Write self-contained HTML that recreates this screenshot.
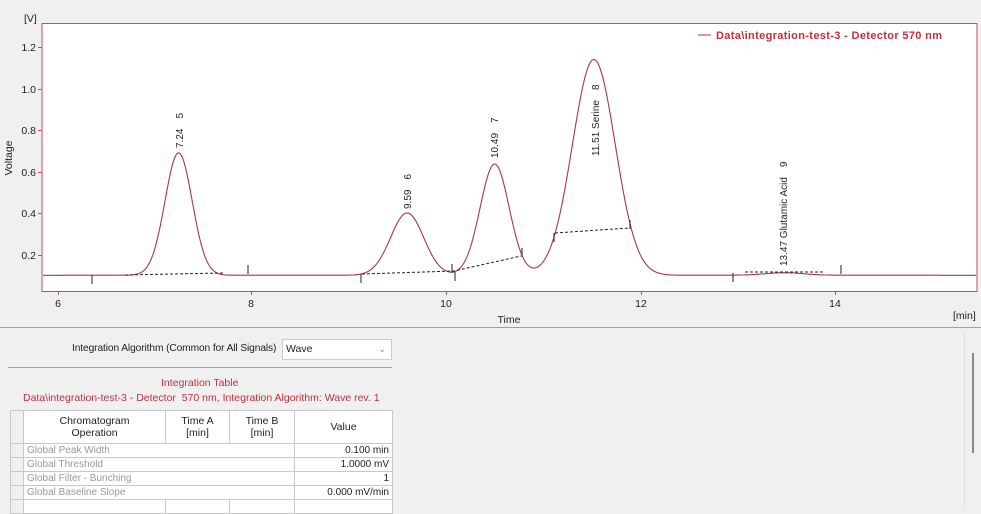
<!DOCTYPE html>
<html><head><meta charset="utf-8"><style>
body{margin:0;width:981px;height:510px;overflow:hidden;background:#f0f0f0;font-family:"Liberation Sans",sans-serif;position:relative}
.abs{position:absolute}
table{border-collapse:collapse;font-size:10px;table-layout:fixed}
td{border:1px solid #c8c8c8;height:13px;padding:0 3px;background:#fff;color:#999;white-space:nowrap;overflow:hidden}
th{border:1px solid #c8c8c8;font-weight:normal;color:#222;background:#fff;font-size:10.5px;line-height:12px}
td.rh,th.rh{background:#f0f0f0;padding:0}
td.v{text-align:right;color:#222}
</style></head><body>
<svg class="abs" style="left:0;top:0" width="981" height="328" font-family="Liberation Sans, sans-serif" font-size="10.5">
<rect x="0" y="0" width="981" height="328" fill="#f0f0f0"/>
<rect x="42" y="23.5" width="935" height="268" fill="#fff" stroke="#c05060" stroke-width="1"/>
<text x="24" y="22" fill="#222">[V]</text>
<g fill="#222" text-anchor="end">
<text x="36" y="51">1.2</text><text x="36" y="93">1.0</text><text x="36" y="134">0.8</text><text x="36" y="176">0.6</text><text x="36" y="217">0.4</text><text x="36" y="259">0.2</text>
</g>
<g stroke="#c05060"><line x1="38" y1="47.5" x2="42" y2="47.5"/><line x1="38" y1="89.5" x2="42" y2="89.5"/><line x1="38" y1="130.5" x2="42" y2="130.5"/><line x1="38" y1="172.5" x2="42" y2="172.5"/><line x1="38" y1="213.5" x2="42" y2="213.5"/><line x1="38" y1="255.5" x2="42" y2="255.5"/>
<line x1="58.5" y1="291" x2="58.5" y2="295"/><line x1="251.5" y1="291" x2="251.5" y2="295"/><line x1="446.5" y1="291" x2="446.5" y2="295"/><line x1="641.5" y1="291" x2="641.5" y2="295"/><line x1="835.5" y1="291" x2="835.5" y2="295"/></g>
<g fill="#222" text-anchor="middle"><text x="58" y="307">6</text><text x="251" y="307">8</text><text x="446" y="307">10</text><text x="641" y="307">12</text><text x="835" y="307">14</text></g>
<text x="509" y="323" fill="#222" text-anchor="middle">Time</text>
<text x="953" y="319" fill="#222">[min]</text>
<text transform="translate(12,158) rotate(-90)" fill="#222" text-anchor="middle">Voltage</text>
<line x1="698" y1="35" x2="711" y2="35" stroke="#c03040"/>
<text x="716" y="39" fill="#c03040" font-weight="bold" font-size="11" textLength="226">Data\integration-test-3 - Detector  570 nm</text>
<path id="sig" fill="none" stroke="#a83848" stroke-width="1.1" d=""/>
<g stroke="#222" stroke-dasharray="3,2" fill="none">
<path d="M125 275 L223 273"/><path d="M362 274 L454 271 L521 256"/><path d="M555 233 L629 228"/><path d="M745 272 L823 272"/>
</g>
<g stroke="#222"><line x1="92" y1="275" x2="92" y2="284"/><line x1="248" y1="265" x2="248" y2="274"/><line x1="361" y1="274" x2="361" y2="283"/><line x1="452" y1="264" x2="452" y2="273"/><line x1="455" y1="272" x2="455" y2="281"/><line x1="522" y1="248" x2="522" y2="257"/><line x1="554" y1="233" x2="554" y2="242"/><line x1="630" y1="220" x2="630" y2="229"/><line x1="733" y1="273" x2="733" y2="282"/><line x1="841" y1="265" x2="841" y2="274"/></g>
<g fill="#222" font-size="10">
<text transform="translate(183,148) rotate(-90)">7.24<tspan dx="10">5</tspan></text>
<text transform="translate(411,209) rotate(-90)">9.59<tspan dx="10">6</tspan></text>
<text transform="translate(498,158) rotate(-90)">10.49<tspan dx="10">7</tspan></text>
<text transform="translate(599,156) rotate(-90)">11.51 Serine<tspan dx="10">8</tspan></text>
<text transform="translate(787,266) rotate(-90)">13.47 Glutamic Acid<tspan dx="10">9</tspan></text>
</g>
<line x1="0" y1="327.5" x2="981" y2="327.5" stroke="#a0a0a0"/>
</svg>
<script>
(function(){var P=[[7.24,0.59,0.14],[9.59,0.3,0.17],[10.49,0.536,0.15],[11.51,1.04,0.22],[13.47,0.012,0.2]];var d="";
for(var x=43;x<=976;x++){var t=6+(x-58)/97.25;var v=0.1;for(var i=0;i<P.length;i++){var z=(t-P[i][0])/P[i][2];v+=P[i][1]*Math.exp(-z*z/2);}var y=296-207.5*v;d+=(x==43?"M":"L")+x+" "+y.toFixed(1);}
document.getElementById("sig").setAttribute("d",d);})();
</script>
<div class="abs" style="left:72px;top:343px;font-size:10.2px;color:#222;letter-spacing:-0.1px">Integration Algorithm (Common for All Signals)</div>
<div class="abs" style="left:282px;top:339px;width:108px;height:19px;border:1px solid #ccc;background:#fff;font-size:10.5px;line-height:19px;color:#222"><span style="margin-left:3px">Wave</span><span style="position:absolute;right:5px;top:0;color:#888;font-size:9px">&#8964;</span></div>
<div class="abs" style="left:8px;top:367px;width:384px;height:1px;background:#a0a0a0"></div>
<div class="abs" style="left:161px;top:377px;font-size:10.5px;color:#c03040">Integration Table</div>
<div class="abs" style="left:23px;top:392px;font-size:10.5px;color:#c03040">Data\integration-test-3 - Detector&nbsp; 570 nm, Integration Algorithm: Wave rev. 1</div>
<table class="abs" style="left:10px;top:410px;width:382px">
<colgroup><col style="width:13px"><col style="width:142px"><col style="width:64px"><col style="width:65px"><col style="width:98px"></colgroup>
<tr style="height:33px"><th class="rh"></th><th>Chromatogram<br>Operation</th><th>Time A<br>[min]</th><th>Time B<br>[min]</th><th>Value</th></tr>
<tr><td class="rh"></td><td colspan="3">Global Peak Width</td><td class="v">0.100 min</td></tr>
<tr><td class="rh"></td><td colspan="3">Global Threshold</td><td class="v">1.0000 mV</td></tr>
<tr><td class="rh"></td><td colspan="3">Global Filter - Bunching</td><td class="v">1</td></tr>
<tr><td class="rh"></td><td colspan="3">Global Baseline Slope</td><td class="v">0.000 mV/min</td></tr>
<tr style="height:14px"><td class="rh"></td><td></td><td></td><td></td><td></td></tr>
</table>
<div class="abs" style="left:964px;top:332px;width:1px;height:178px;background:#e0e0e0"></div>
<div class="abs" style="left:972px;top:353px;width:2px;height:100px;background:#888"></div>
</body></html>
